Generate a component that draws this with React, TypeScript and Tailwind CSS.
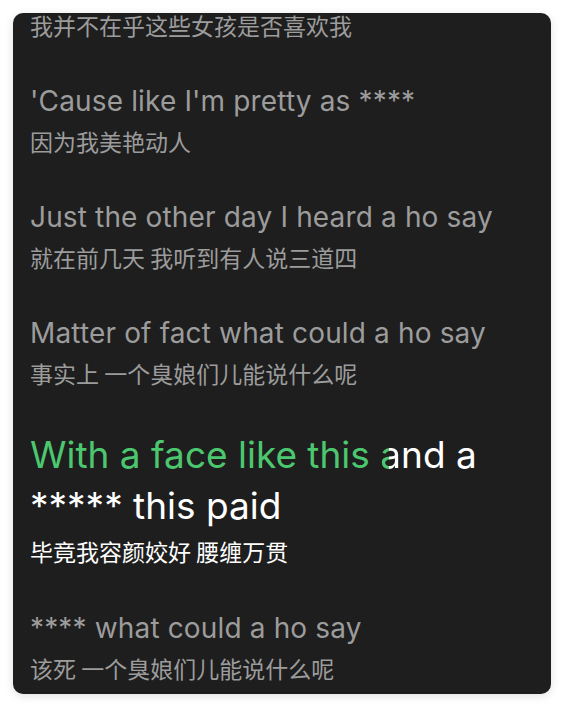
import React from "react";

const en = "font-['Inter','Noto_Sans',sans-serif]";
const cn = "font-['Noto_Sans_CJK_SC','Noto_Sans',sans-serif]";

const lines: { en: string; cn: string }[] = [
  { en: "I don't care if these girls like me", cn: "我并不在乎这些女孩是否喜欢我" },
  { en: "'Cause like I'm pretty as ****", cn: "因为我美艳动人" },
  { en: "Just the other day I heard a ho say", cn: "就在前几天 我听到有人说三道四" },
  { en: "Matter of fact what could a ho say", cn: "事实上 一个臭娘们儿能说什么呢" },
];

function Block({ e, c }: { e: string; c: string }) {
  return (
    <div className="flex flex-col">
      <p className={`${en} text-[28px] leading-[40px] text-[#9c9c9c] tracking-[0.15px]`}>{e}</p>
      <p className={`${cn} mt-[2px] text-[23px] leading-[36px] text-[#9c9c9c]`}>{c}</p>
    </div>
  );
}

export default function App() {
  return (
    <div className="min-h-[709px] w-full bg-white pt-[13px] px-[13px]">
      <div className="h-[681px] w-[538px] overflow-hidden rounded-[10px] bg-[#1e1e1e] shadow-[0_2px_10px_rgba(0,0,0,0.12)]">
        <div className="-mt-[48px] flex flex-col gap-[38px] px-[17px]">
          {lines.map((l) => (
            <Block key={l.en} e={l.en} c={l.cn} />
          ))}
          <div className="flex flex-col">
            <p className={`${en} text-[37px] leading-[51px] text-white`}>
              <span className="text-[#4cc76f]">With a face like this </span>
              <span className="bg-[linear-gradient(90deg,#4cc76f_42%,#ffffff_42%)] bg-clip-text text-transparent">a</span>
              nd a ***** this paid
            </p>
            <p className={`${cn} mt-[2px] text-[23px] leading-[36px] text-white`}>毕竟我容颜姣好 腰缠万贯</p>
          </div>
          <div className="mt-[1px]">
            <Block e="**** what could a ho say" c="该死 一个臭娘们儿能说什么呢" />
          </div>
        </div>
      </div>
    </div>
  );
}
